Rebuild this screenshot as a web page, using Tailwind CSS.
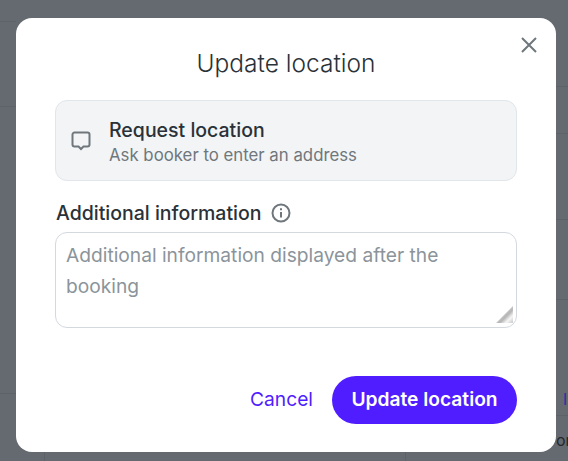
<!DOCTYPE html>
<html lang="en">
<head>
    <meta charset="UTF-8">
    <meta name="viewport" content="width=device-width, initial-scale=1.0">
    <title>Update location</title>
    <script src="https://cdn.jsdelivr.net/npm/@tailwindcss/browser@4"></script>
</head>
<body class="font-['Inter',sans-serif]">
    <div class="relative w-[568px] h-[461px] overflow-hidden bg-[#646a70]">
        <!-- Page behind the overlay -->
        <div class="absolute left-0 top-[21px] w-[16px] h-px bg-[#5c6268]"></div>
        <div class="absolute left-0 top-[106px] w-[16px] h-px bg-[#5c6268]"></div>
        <div class="absolute left-0 top-[393px] w-[16px] h-px bg-[#5c6268]"></div>
        <div class="absolute right-0 top-[86px] w-[12px] h-px bg-[#5c6268]"></div>
        <div class="absolute right-0 top-[133px] w-[12px] h-px bg-[#5c6268]"></div>
        <div class="absolute right-0 top-[219px] w-[12px] h-px bg-[#5c6268]"></div>
        <div class="absolute right-0 top-[299px] w-[12px] h-px bg-[#5c6268]"></div>
        <div class="absolute right-0 top-[415px] w-[12px] h-px bg-[#5c6268]"></div>
        <div class="absolute left-[44px] top-[452px] w-px h-[9px] bg-[#5c6268]"></div>
        <div class="absolute left-[405px] top-[452px] w-px h-[9px] bg-[#5c6268]"></div>
        <span class="absolute left-[563px] top-[388px] text-base leading-[22px] text-[#3a2a9e]">I</span>
        <span class="absolute left-[556px] top-[429px] text-base leading-[22px] text-[#23282d]">or</span>

        <!-- Modal -->
        <div class="absolute left-[16px] top-[18px] w-[540px] h-[434px] bg-white rounded-2xl px-[39px] pt-[28px]">
            <button class="absolute right-[18px] top-[18px] text-[#6f777c]">
                <svg class="w-[18px] h-[18px]" viewBox="0 0 18 18" fill="none" stroke="currentColor" stroke-width="2">
                    <path d="M2 2l14 14M16 2L2 16"/>
                </svg>
            </button>
            <h2 class="text-center text-[24.5px] leading-[35px] font-light text-[#2a3138]">Update location</h2>

            <div class="mt-[19px] h-[81px] flex items-center gap-[18px] px-[15px] bg-[#f2f4f6] border border-[#e1e6ea] rounded-xl">
                <svg class="w-[20px] h-[20px] shrink-0 text-[#6f777c]" viewBox="0 0 20 20" fill="none" stroke="currentColor" stroke-width="2">
                    <path d="M3.500 1.500h13a2 2 0 0 1 2 2v10a2 2 0 0 1-2 2h-4l-2.500 2.500L7.500 15.500h-4a2 2 0 0 1-2-2v-10a2 2 0 0 1 2-2z"/>
                </svg>
                <div class="pt-[3px]">
                    <div class="text-[19.5px] leading-[25px] font-medium text-[#2a3138]">Request location</div>
                    <div class="text-[16.800px] leading-[24px] text-[#6f777c]">Ask booker to enter an address</div>
                </div>
            </div>

            <div class="mt-[20px] flex items-center gap-[10px] pl-px">
                <span class="text-[19.5px] leading-[25px] font-medium text-[#2a3138]">Additional information</span>
                <svg class="mb-[2px] w-[20px] h-[20px] text-[#6f777c]" viewBox="0 0 20 20" fill="none" stroke="currentColor" stroke-width="2">
                    <circle cx="10" cy="10" r="8.500"/>
                    <path d="M10 9v5.500M10 5.200v2"/>
                </svg>
            </div>
            <div class="relative mt-[6px]">
                <textarea class="block w-full h-[96px] pl-[10px] pr-[60px] py-[7px] text-[19.2px] leading-[31px] border border-[#d3d9df] rounded-xl outline-none resize-none placeholder:text-[#8b949b]" placeholder="Additional information displayed after the booking"></textarea>
                <!-- Resize grip -->
                <svg class="absolute right-[3px] bottom-[4px] w-[19px] h-[19px]" viewBox="0 0 18 18">
                    <defs>
                        <linearGradient id="grip" x1="0" y1="0" x2="1" y2="1">
                            <stop offset="0.5" stop-color="#c4c4c4"/>
                            <stop offset="0.6" stop-color="#b4b4b4"/>
                            <stop offset="0.78" stop-color="#f6f6f6"/>
                            <stop offset="1" stop-color="#c8c8c8"/>
                        </linearGradient>
                    </defs>
                    <path d="M17 1v16H1z" fill="url(#grip)"/>
                </svg>
            </div>

            <div class="mt-[48px] flex items-center justify-end gap-[19px]">
                <button class="pb-[2px] text-[19.2px] text-[#4f1dff]">Cancel</button>
                <button class="h-[48px] w-[185px] rounded-full bg-[#4f1dff] pb-px text-[19.2px] font-semibold text-white">Update location</button>
            </div>
        </div>
    </div>
</body>
</html>
